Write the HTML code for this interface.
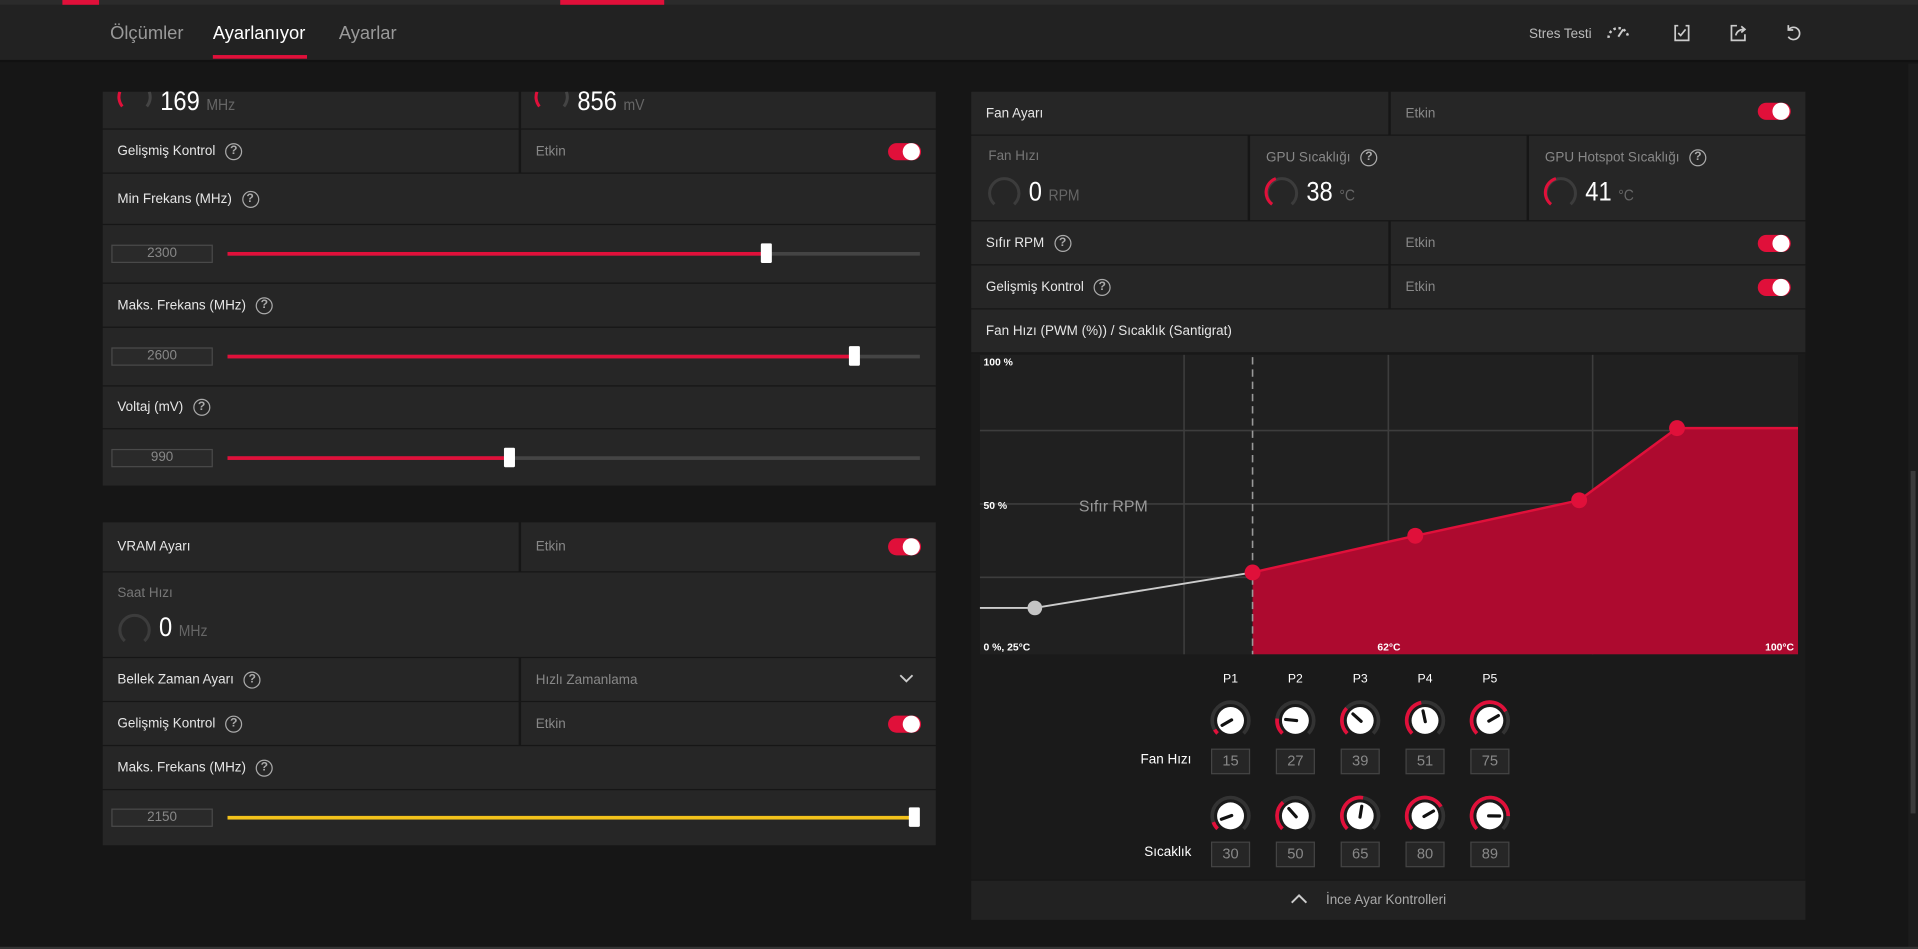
<!DOCTYPE html>
<html><head><meta charset="utf-8">
<style>
*{box-sizing:border-box;margin:0;padding:0}
html,body{width:1918px;height:949px;overflow:hidden;background:#161616;font-family:"Liberation Sans",sans-serif;color:#ddd}
#w{position:absolute;left:0;top:0;width:1568px;height:776px;transform:scale(1.22321);transform-origin:0 0;background:#161616}
.a{position:absolute}
.row{position:absolute;background:#262626;font-size:11px;color:#e6e6e6}
.row .t{position:absolute;left:12px;top:50%;transform:translateY(-50%)}
.q{display:inline-block;width:14px;height:14px;border:1.4px solid #aaa;border-radius:50%;font-size:10px;line-height:11px;text-align:center;color:#aaa;margin-left:8px;vertical-align:middle;font-weight:bold}
.dim{color:#888}
.tg{position:absolute;width:27px;height:14px;border-radius:7px;background:#e0103a}
.tg:after{content:"";position:absolute;right:1px;top:0;width:14px;height:14px;border-radius:50%;background:#fff}
.inp{position:absolute;width:83px;height:15px;border:1px solid #4a4a4a;background:#2a2a2a;color:#888;font-size:11px;text-align:center;line-height:13px}
.trk{position:absolute;height:3px;background:#444}
.thumb{position:absolute;width:9px;height:16px;background:#fff;border-radius:1px}
.box{position:absolute;width:32px;height:21px;border:1px solid #444;background:#262626;color:#888;font-size:12px;text-align:center;line-height:19px}
.big{display:inline-block;transform:scaleX(.88);transform-origin:0 50%}
</style></head><body><div id="w">
<div class="a" style="left:0;top:0;width:1568px;height:4px;background:#2b2b2b"></div>
<div class="a" style="left:51px;top:0;width:30px;height:4px;background:#e0103a"></div>
<div class="a" style="left:458px;top:0;width:85px;height:4px;background:#e0103a"></div>
<div class="a" style="left:0;top:4px;width:1568px;height:47px;background:#222;border-bottom:2px solid #111"></div>
<div class="a" style="left:90px;top:19px;font-size:15px;color:#999">Ölçümler</div>
<div class="a" style="left:174px;top:19px;font-size:15px;color:#fff">Ayarlanıyor</div>
<div class="a" style="left:174px;top:45px;width:77px;height:3px;background:#e0103a"></div>
<div class="a" style="left:277px;top:19px;font-size:15px;color:#999">Ayarlar</div>
<div class="a" style="left:1250px;top:22px;font-size:11px;color:#bbb">Stres Testi</div>
<svg class="a" style="left:1312px;top:18px" width="22" height="16" viewBox="0 0 22 16"><g stroke="#ccc" stroke-width="2" stroke-dasharray="2 2.2" fill="none"><path d="M3 13 A8 8 0 0 1 19 13"/></g><path d="M11 12 L15 6" stroke="#ccc" stroke-width="1.6"/></svg>
<svg class="a" style="left:1367px;top:19px" width="16" height="16" viewBox="0 0 16 16" fill="none" stroke="#ccc" stroke-width="1.4"><path d="M5 2H2.5v12h11V2H11"/><path d="M11 5L7 10 5 8"/></svg>
<svg class="a" style="left:1413px;top:19px" width="16" height="16" viewBox="0 0 16 16" fill="none" stroke="#ccc" stroke-width="1.4"><path d="M7 2H2.5v12h11V9"/><path d="M6 10C7 6 10 5 13 5M10.5 2.5L13.5 5 10.5 7.5"/></svg>
<svg class="a" style="left:1458px;top:19px" width="16" height="16" viewBox="0 0 16 16" fill="none" stroke="#ccc" stroke-width="1.4"><path d="M4.5 5A5 5 0 1 1 4 11"/><path d="M4 1.5V5.5H8"/></svg>
<div class="a" style="left:1560px;top:52px;width:8px;height:724px;background:#1c1c1c"></div>
<div class="a" style="left:1562px;top:385px;width:4px;height:280px;background:#3a3a3a"></div>

<div class="row" style="left:84px;top:75px;width:340px;height:30px"></div>
<div class="row" style="left:426px;top:75px;width:339px;height:30px"></div>
<div class="a" style="left:131px;top:70px;font-size:22px;color:#fff"><span class="big">169 <span style="font-size:13px;color:#666">MHz</span></span></div>
<div class="a" style="left:472px;top:70px;font-size:22px;color:#fff"><span class="big">856 <span style="font-size:13px;color:#666">mV</span></span></div>
<svg class="a" style="left:94px;top:75px" width="34" height="14"><path d="M4 0 A12 12 0 0 0 6 12" stroke="#e0103a" stroke-width="2.5" fill="none"/><path d="M28 0 A12 12 0 0 1 26 12" stroke="#444" stroke-width="2.5" fill="none"/></svg>
<svg class="a" style="left:435px;top:75px" width="34" height="14"><path d="M4 0 A12 12 0 0 0 6 12" stroke="#e0103a" stroke-width="2.5" fill="none"/><path d="M28 0 A12 12 0 0 1 26 12" stroke="#444" stroke-width="2.5" fill="none"/></svg>
<div class="row" style="left:84px;top:106px;width:340px;height:35px"><span class="t">Gelişmiş Kontrol<span class="q">?</span></span></div>
<div class="row" style="left:426px;top:106px;width:339px;height:35px"><span class="t dim">Etkin</span><div class="tg" style="left:300px;top:11px"></div></div>
<div class="row" style="left:84px;top:142px;width:681px;height:41px"><span class="t">Min Frekans (MHz)<span class="q">?</span></span></div>
<div class="row" style="left:84px;top:184px;width:681px;height:47px"></div>
<div class="inp" style="left:91px;top:200px">2300</div>
<div class="trk" style="left:186px;top:206px;width:566px"></div><div class="trk" style="left:186px;top:206px;width:440px;background:#e0103a"></div><div class="thumb" style="left:622px;top:199px"></div>
<div class="row" style="left:84px;top:232px;width:681px;height:35px"><span class="t">Maks. Frekans (MHz)<span class="q">?</span></span></div>
<div class="row" style="left:84px;top:268px;width:681px;height:47px"></div>
<div class="inp" style="left:91px;top:284px">2600</div>
<div class="trk" style="left:186px;top:290px;width:566px"></div><div class="trk" style="left:186px;top:290px;width:512px;background:#e0103a"></div><div class="thumb" style="left:694px;top:283px"></div>
<div class="row" style="left:84px;top:316px;width:681px;height:34px"><span class="t">Voltaj (mV)<span class="q">?</span></span></div>
<div class="row" style="left:84px;top:351px;width:681px;height:46px"></div>
<div class="inp" style="left:91px;top:367px">990</div>
<div class="trk" style="left:186px;top:373px;width:566px"></div><div class="trk" style="left:186px;top:373px;width:230px;background:#e0103a"></div><div class="thumb" style="left:412px;top:366px"></div>

<div class="row" style="left:84px;top:427px;width:340px;height:40px"><span class="t">VRAM Ayarı</span></div>
<div class="row" style="left:426px;top:427px;width:339px;height:40px"><span class="t dim">Etkin</span><div class="tg" style="left:300px;top:13px"></div></div>
<div class="row" style="left:84px;top:468px;width:681px;height:69px"></div>
<div class="a" style="left:96px;top:479px;font-size:11px;color:#777">Saat Hızı</div>
<svg class="a" style="left:95px;top:499px" width="30" height="30"><path d="M7 25 A12 12 0 1 1 23 25" stroke="#3c3c3c" stroke-width="2.5" fill="none"/></svg>
<div class="a" style="left:130px;top:500px;font-size:22px;color:#fff"><span class="big">0 <span style="font-size:13px;color:#666">MHz</span></span></div>
<div class="row" style="left:84px;top:538px;width:340px;height:35px"><span class="t">Bellek Zaman Ayarı<span class="q">?</span></span></div>
<div class="row" style="left:426px;top:538px;width:339px;height:35px"><span class="t dim">Hızlı Zamanlama</span><svg class="a" style="left:309px;top:12px" width="12" height="10"><path d="M1 2L6 7 11 2" stroke="#ccc" stroke-width="1.5" fill="none"/></svg></div>
<div class="row" style="left:84px;top:574px;width:340px;height:35px"><span class="t">Gelişmiş Kontrol<span class="q">?</span></span></div>
<div class="row" style="left:426px;top:574px;width:339px;height:35px"><span class="t dim">Etkin</span><div class="tg" style="left:300px;top:11px"></div></div>
<div class="row" style="left:84px;top:610px;width:681px;height:35px"><span class="t">Maks. Frekans (MHz)<span class="q">?</span></span></div>
<div class="row" style="left:84px;top:646px;width:681px;height:45px"></div>
<div class="inp" style="left:91px;top:661px">2150</div>
<div class="trk" style="left:186px;top:667px;width:562px;background:#f3c21b"></div><div class="thumb" style="left:743px;top:660px"></div>

<div class="row" style="left:794px;top:75px;width:341px;height:35px"><span class="t">Fan Ayarı</span></div>
<div class="row" style="left:1137px;top:75px;width:339px;height:35px"><span class="t dim">Etkin</span><div class="tg" style="left:300px;top:9px"></div></div>
<div class="row" style="left:794px;top:111px;width:226px;height:69px"></div>
<div class="row" style="left:1022px;top:111px;width:226px;height:69px"></div>
<div class="row" style="left:1250px;top:111px;width:226px;height:69px"></div>
<div class="a" style="left:808px;top:122px;font-size:11px;color:#777">Fan Hızı</div>
<div class="a" style="left:1035px;top:122px;font-size:11px;color:#888">GPU Sıcaklığı<span class="q">?</span></div>
<div class="a" style="left:1263px;top:122px;font-size:11px;color:#888">GPU Hotspot Sıcaklığı<span class="q">?</span></div>
<svg class="a" style="left:806px;top:142px" width="30" height="30"><path d="M7 25 A12 12 0 1 1 23 25" stroke="#3c3c3c" stroke-width="2.5" fill="none"/></svg>
<svg class="a" style="left:1033px;top:142px" width="30" height="30"><path d="M7 25 A12 12 0 1 1 23 25" stroke="#3c3c3c" stroke-width="2.5" fill="none"/><path d="M7 25 A12 12 0 0 1 10 4" stroke="#e0103a" stroke-width="2.5" fill="none"/></svg>
<svg class="a" style="left:1261px;top:142px" width="30" height="30"><path d="M7 25 A12 12 0 1 1 23 25" stroke="#3c3c3c" stroke-width="2.5" fill="none"/><path d="M7 25 A12 12 0 0 1 11 4" stroke="#e0103a" stroke-width="2.5" fill="none"/></svg>
<div class="a" style="left:841px;top:144px;font-size:22px;color:#fff"><span class="big">0 <span style="font-size:13px;color:#666">RPM</span></span></div>
<div class="a" style="left:1068px;top:144px;font-size:22px;color:#fff"><span class="big">38 <span style="font-size:13px;color:#666">°C</span></span></div>
<div class="a" style="left:1296px;top:144px;font-size:22px;color:#fff"><span class="big">41 <span style="font-size:13px;color:#666">°C</span></span></div>
<div class="row" style="left:794px;top:181px;width:341px;height:35px"><span class="t">Sıfır RPM<span class="q">?</span></span></div>
<div class="row" style="left:1137px;top:181px;width:339px;height:35px"><span class="t dim">Etkin</span><div class="tg" style="left:300px;top:11px"></div></div>
<div class="row" style="left:794px;top:217px;width:341px;height:35px"><span class="t">Gelişmiş Kontrol<span class="q">?</span></span></div>
<div class="row" style="left:1137px;top:217px;width:339px;height:35px"><span class="t dim">Etkin</span><div class="tg" style="left:300px;top:11px"></div></div>
<div class="row" style="left:794px;top:253px;width:682px;height:35px"><span class="t">Fan Hızı (PWM (%)) / Sıcaklık (Santigrat)</span></div>
<div class="a" style="left:794px;top:289px;width:682px;height:430px;background:#1a1a1a"></div>
<svg class="a" style="left:801px;top:290px" width="669" height="245" viewBox="801 290 669 245">
<rect x="801" y="290" width="669" height="245" fill="#202020"/>
<g stroke="#3d3d3d" stroke-width="1.3"><path d="M968 290V535M1135 290V535M1302 290V535M801 352H1470M801 412H1470M801 472H1470"/></g>
<path d="M1024 468L1157 438 1291 409 1371 350 1470 350 1470 535 1024 535Z" fill="#ad0a2f"/>
<path d="M1024 468L1157 438 1291 409 1371 350 1470 350" stroke="#e0103a" stroke-width="2" fill="none"/>
<path d="M1024 292V535" stroke="#999" stroke-width="1.3" stroke-dasharray="6 4"/>
<path d="M801 497H846L1024 468" stroke="#ccc" stroke-width="1.6" fill="none"/>
<circle cx="846" cy="497" r="6" fill="#c4c4c4"/>
<g fill="#e0103a"><circle cx="1024" cy="468" r="6.5"/><circle cx="1157" cy="438" r="6.5"/><circle cx="1291" cy="409" r="6.5"/><circle cx="1371" cy="350" r="6.5"/></g>
<g font-family="Liberation Sans" font-size="8.5" fill="#fff" font-weight="bold"><text x="804" y="299">100 %</text><text x="804" y="416">50 %</text><text x="804" y="532">0 %, 25°C</text><text x="1126" y="532">62°C</text><text x="1443" y="532">100°C</text></g>
<text x="882" y="418" font-family="Liberation Sans" font-size="13" fill="#999">Sıfır RPM</text>
</svg>
<div id="kn"></div>
<div class="a" style="left:912px;top:615px;width:62px;text-align:right;font-size:11px;color:#fff">Fan Hızı</div>
<div class="a" style="left:912px;top:691px;width:62px;text-align:right;font-size:11px;color:#fff">Sıcaklık</div>
<div class="a" style="left:794px;top:720px;width:682px;height:32px;background:#222"></div>
<svg class="a" style="left:1055px;top:731px" width="14" height="9"><path d="M1 7L7 1 13 7" stroke="#ccc" stroke-width="1.6" fill="none"/></svg>
<div class="a" style="left:1084px;top:730px;font-size:11px;color:#aaa">İnce Ayar Kontrolleri</div>
<div class="a" style="left:0;top:774px;width:1568px;height:2px;background:#333"></div>
</div>
<script>
var xs=[1006,1059,1112,1165,1218],fan=[15,27,39,51,75],tmp=[30,50,65,80,89],h='';
function pt(cx,cy,r,a){a=a*Math.PI/180;return [(cx+r*Math.sin(a)).toFixed(2),(cy-r*Math.cos(a)).toFixed(2)];}
function arc(cx,cy,r,a0,a1){var p=pt(cx,cy,r,a0),q=pt(cx,cy,r,a1);return 'M'+p+'A'+r+' '+r+' 0 '+((a1-a0)>180?1:0)+' 1 '+q;}
function knob(cx,cy,a){if(a<-135)a=-135;var s='<svg class="a" style="left:'+(cx-18)+'px;top:'+(cy-18)+'px" width="36" height="36" viewBox="'+(cx-18)+' '+(cy-18)+' 36 36">';
s+='<path d="'+arc(cx,cy,15,-135,135)+'" stroke="#333" stroke-width="3" fill="none"/>';
if(a>-128)s+='<path d="'+arc(cx,cy,15,-135,a)+'" stroke="#e0103a" stroke-width="3" fill="none"/>';
s+='<circle cx="'+cx+'" cy="'+cy+'" r="11" fill="#fff"/>';var p=pt(cx,cy,8,a),q=pt(cx,cy,-1,a);
s+='<path d="M'+q+'L'+p+'" stroke="#111" stroke-width="2.6" stroke-linecap="round"/></svg>';return s;}
for(var i=0;i<5;i++){var x=xs[i];
h+='<div class="a" style="left:'+(x-10)+'px;top:550px;width:20px;text-align:center;font-size:10px;color:#fff">P'+(i+1)+'</div>';
h+=knob(x,589,-165+3*fan[i])+knob(x,667,-110+3.4*(tmp[i]-30));
h+='<div class="box" style="left:'+(x-16)+'px;top:612px">'+fan[i]+'</div><div class="box" style="left:'+(x-16)+'px;top:688px">'+tmp[i]+'</div>';}
document.getElementById('kn').innerHTML=h;
</script>
</body></html>
